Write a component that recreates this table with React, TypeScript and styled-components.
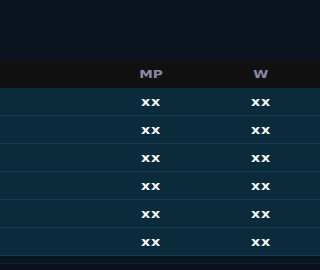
import React from "react";
import styled, { createGlobalStyle } from "styled-components";

const GlobalStyle = createGlobalStyle`
  html, body {
    margin: 0;
    padding: 0;
    background: #0c1220;
  }
  body {
    font-family: "DejaVu Sans", "Liberation Sans", sans-serif;
  }
`;

const Page = styled.div`
  width: 320px;
  height: 270px;
  background: #0c1220;
  display: flex;
  flex-direction: column;
  overflow: hidden;
`;

const TopSpace = styled.div`
  height: 60px;
  background: #0c1320;
`;

const Table = styled.div`
  display: flex;
  flex-direction: column;
`;

const HeaderRow = styled.div`
  display: grid;
  grid-template-columns: 96px 110px 110px 1fr;
  height: 28px;
  align-items: center;
  background: #111112;
`;

const HeaderCell = styled.div`
  text-align: center;
  color: #8a88a6;
  font-size: 10.5px;
  font-weight: 700;
`;

const Wide = styled.span<{ $scale: number }>`
  display: inline-block;
  transform: scaleX(${(p) => p.$scale});
`;

const Row = styled.div`
  display: grid;
  grid-template-columns: 96px 110px 110px 1fr;
  height: 28px;
  box-sizing: border-box;
  align-items: center;
  background: #0b2a3b;
  border-bottom: 1px solid #153a4b;
`;

const Cell = styled.div`
  text-align: center;
  color: #f4f6f8;
  font-size: 13px;
  font-weight: 700;
  letter-spacing: 0.5px;
  line-height: 1;
`;

const Footer = styled.div`
  height: 7px;
  background: #0a1522;
  border-bottom: 1px solid #15222e;
`;

const Bottom = styled.div`
  flex: 1;
  background: #0a111c;
`;

const rows = Array.from({ length: 6 }, () => ({ mp: "xx", w: "xx" }));

export default function App() {
  return (
    <>
      <GlobalStyle />
      <Page>
        <TopSpace />
        <Table>
          <HeaderRow>
            <HeaderCell />
            <HeaderCell>
              <Wide $scale={1.3}>MP</Wide>
            </HeaderCell>
            <HeaderCell>
              <Wide $scale={1.3}>W</Wide>
            </HeaderCell>
            <HeaderCell />
          </HeaderRow>
          {rows.map((r, i) => (
            <Row key={i}>
              <Cell />
              <Cell>
                <Wide $scale={1.1}>{r.mp}</Wide>
              </Cell>
              <Cell>
                <Wide $scale={1.1}>{r.w}</Wide>
              </Cell>
              <Cell />
            </Row>
          ))}
        </Table>
        <Footer />
        <Bottom />
      </Page>
    </>
  );
}
